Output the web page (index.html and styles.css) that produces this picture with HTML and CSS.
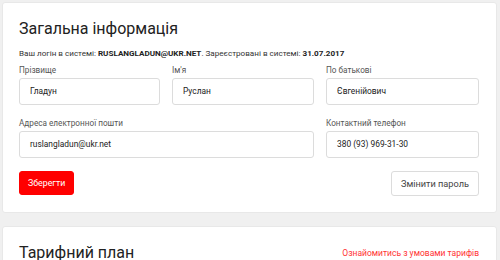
FILE: index.html
```html
<!DOCTYPE html>
<html>
<head>
    <meta charset="utf-8">
    <link rel="stylesheet" href="styles.css">
</head>
<body>
    <div class="page">
        <!-- Загальна інформація -->
        <div class="card">
            <h2 class="card-title">Загальна інформація</h2>
            <div class="login-info">
                Ваш логін в системі: <b>RUSLANGLADUN@UKR.NET</b>. Зареєстровані в системі: <b>31.07.2017</b>
            </div>
            <div class="form-grid">
                <div class="field">
                    <label class="field-label">Прізвище</label>
                    <div class="field-input">Гладун</div>
                </div>
                <div class="field">
                    <label class="field-label">Ім'я</label>
                    <div class="field-input">Руслан</div>
                </div>
                <div class="field">
                    <label class="field-label">По батькові</label>
                    <div class="field-input">Євгенійович</div>
                </div>
                <div class="field field-wide">
                    <label class="field-label">Адреса електронної пошти</label>
                    <div class="field-input">ruslangladun@ukr.net</div>
                </div>
                <div class="field">
                    <label class="field-label">Контактний телефон</label>
                    <div class="field-input">380 (93) 969-31-30</div>
                </div>
            </div>
            <div class="actions">
                <button class="btn btn-red">Зберегти</button>
                <button class="btn btn-light">Змінити пароль</button>
            </div>
        </div>

        <!-- Тарифний план -->
        <div class="card card-tariff">
            <div class="tariff-head">
                <h2 class="card-title">Тарифний план</h2>
                <a class="tariff-link" href="#">Ознайомитись з умовами тарифів</a>
            </div>
        </div>
    </div>
</body>
</html>
```

FILE: styles.css
```css
body {
    margin: 0;
    background: #f0f0f0;
    font-family: Roboto, 'Noto Sans', sans-serif;
    color: #333;
    overflow: hidden;
}

.page {
    padding: 2px 3px 0 2px;
    display: flex;
    flex-direction: column;
    gap: 13px;
}

.card {
    background: #fff;
    border: 1px solid #e8e8e8;
    border-radius: 3px;
    padding: 14px 17px 16px 16px;
}

.card-title {
    margin: 0;
    font-size: 16px;
    font-weight: 400;
    color: #222;
    line-height: 24px;
}

.login-info {
    font-size: 8.1px;
    line-height: 13px;
    margin-top: 6px;
    color: #333;
    white-space: nowrap;
}

.login-info b {
    font-weight: 700;
    color: #222;
}

.form-grid {
    display: grid;
    grid-template-columns: 141px 142px 153px;
    column-gap: 12px;
    row-gap: 12px;
    margin-top: 4px;
}

.field-wide {
    grid-column: span 2;
}

.field-label {
    display: block;
    font-size: 8.2px;
    color: #555;
    line-height: 13px;
    margin-bottom: 1px;
}

.field-input {
    height: 25px;
    border: 1px solid #dcdcdc;
    border-radius: 3px;
    padding: 0 10px;
    font-size: 8.4px;
    line-height: 25px;
    color: #222;
}

.actions {
    display: flex;
    justify-content: space-between;
    width: 460px;
    margin-top: 12.5px;
}

.btn {
    font-family: inherit;
    border-radius: 3px;
    cursor: pointer;
}

.btn-red {
    background: #ff0000;
    color: #fff;
    border: 1px solid #ff0000;
    font-size: 8.8px;
    height: 24px;
    padding: 0 8px;
}

.btn-light {
    background: #fff;
    color: #444;
    border: 1px solid #dcdcdc;
    font-size: 9.2px;
    height: 25px;
    padding: 0 9px;
}

.card-tariff {
    padding-top: 14px;
}

.tariff-head {
    display: flex;
    justify-content: space-between;
    align-items: center;
    width: 460px;
}

.tariff-link {
    color: #ff3333;
    font-size: 8.5px;
    text-decoration: none;
}
```
